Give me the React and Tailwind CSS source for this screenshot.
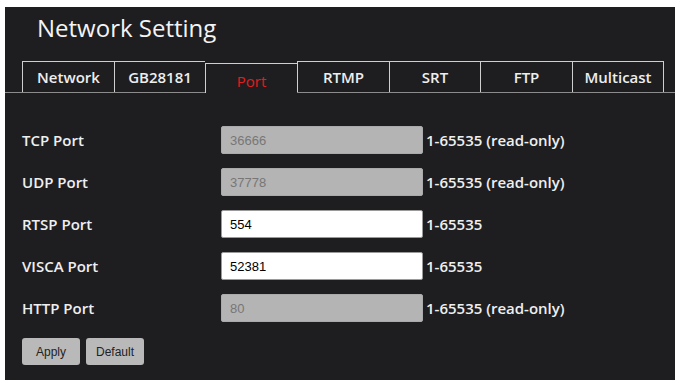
import { useState } from 'react';

const tabs = [
  { name: 'Network', w: 'w-[92px]' },
  { name: 'GB28181', w: 'w-[91px]' },
  { name: 'Port', w: 'w-[92px]' },
  { name: 'RTMP', w: 'w-[92px]' },
  { name: 'SRT', w: 'w-[91px]' },
  { name: 'FTP', w: 'w-[92px]' },
  { name: 'Multicast', w: 'w-[92px]' },
];

const ports = [
  { label: 'TCP Port', value: '36666', readOnly: true },
  { label: 'UDP Port', value: '37778', readOnly: true },
  { label: 'RTSP Port', value: '554', readOnly: false },
  { label: 'VISCA Port', value: '52381', readOnly: false },
  { label: 'HTTP Port', value: '80', readOnly: true },
];

export default function App() {
  const [active, setActive] = useState('Port');

  return (
    <div className="w-[681px] h-[384px] bg-white pt-[7px] pl-[5px] font-['Open_Sans',sans-serif]">
      <div className="w-[670px] h-[373px] bg-[#1e1e21] pt-[6px]">
        {/* Title */}
        <h1 className="pl-[32px] text-[24px] leading-[30px] text-[#f4f4f4]">Network Setting</h1>

        {/* Tabs */}
        <div className="mt-[18px] flex items-end h-[32px] border-b border-[#8c8c8c] pl-[17px]">
          {tabs.map((t, i) => {
            const isActive = t.name === active;
            return (
              <button
                key={t.name}
                onClick={() => setActive(t.name)}
                className={`${t.w} border-t border-l border-[#cfcfcf] ${i === tabs.length - 1 ? 'border-r' : ''} ${
                  isActive
                    ? 'h-[30px] -mb-px bg-[#1e1e21] pt-[4px] text-[15px] text-[#e31c1c]'
                    : 'h-[31px] text-[15px] font-semibold text-[#eeeeee]'
                } leading-[20px] flex items-center justify-center`}
              >
                {t.name}
              </button>
            );
          })}
        </div>

        {/* Form */}
        <div className="pl-[17px] pt-[33px] flex flex-col gap-[14px]">
          {ports.map((p) => (
            <div key={p.label} className="flex items-center h-[28px]">
              <span className="w-[199px] text-[15px] font-semibold text-[#efefef]">{p.label}</span>
              <input
                readOnly={p.readOnly}
                defaultValue={p.value}
                className={`w-[202px] h-[28px] rounded-[2px] px-[8px] text-[13px] font-['Liberation_Sans',Arial,sans-serif] outline-none border ${
                  p.readOnly
                    ? 'bg-[#b4b4b4] border-[#aaaaaa] text-[#777777]'
                    : 'bg-white border-[#9a9a9a] text-black'
                }`}
              />
              <span className="ml-[3px] text-[15px] font-semibold text-[#efefef]">
                {p.readOnly ? '1-65535 (read-only)' : '1-65535'}
              </span>
            </div>
          ))}

          <div className="flex gap-[6px] mt-[2px]">
            <button className="w-[58px] h-[27px] rounded-[3px] bg-[#b9b9b9] text-[12px] text-[#222] font-['Liberation_Sans',Arial,sans-serif]">
              Apply
            </button>
            <button className="w-[58px] h-[27px] rounded-[3px] bg-[#b9b9b9] text-[12px] text-[#222] font-['Liberation_Sans',Arial,sans-serif]">
              Default
            </button>
          </div>
        </div>
      </div>
    </div>
  );
}
